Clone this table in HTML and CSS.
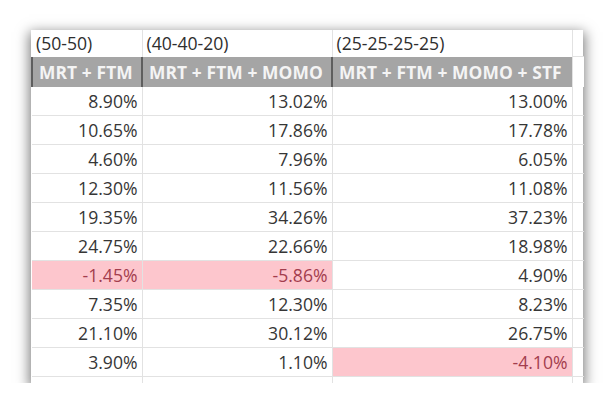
FILE: index.html
```html
<!DOCTYPE html>
<html>
<head>
<meta charset="utf-8">
<link rel="stylesheet" href="styles.css">
</head>
<body>
<div class="sheet">
  <table class="grid">
    <colgroup>
      <col class="c1"><col class="c2"><col class="c3"><col class="c4">
    </colgroup>
    <tr class="cap">
      <td>(50-50)</td><td>(40-40-20)</td><td>(25-25-25-25)</td><td></td>
    </tr>
    <tr class="head">
      <th>MRT + FTM</th><th>MRT + FTM + MOMO</th><th>MRT + FTM + MOMO + STF</th><td class="blank"></td>
    </tr>
    <tr><td>8.90%</td><td>13.02%</td><td>13.00%</td><td></td></tr>
    <tr><td>10.65%</td><td>17.86%</td><td>17.78%</td><td></td></tr>
    <tr><td>4.60%</td><td>7.96%</td><td>6.05%</td><td></td></tr>
    <tr><td>12.30%</td><td>11.56%</td><td>11.08%</td><td></td></tr>
    <tr><td>19.35%</td><td>34.26%</td><td>37.23%</td><td></td></tr>
    <tr><td>24.75%</td><td>22.66%</td><td>18.98%</td><td></td></tr>
    <tr><td class="neg">-1.45%</td><td class="neg">-5.86%</td><td>4.90%</td><td></td></tr>
    <tr><td>7.35%</td><td>12.30%</td><td>8.23%</td><td></td></tr>
    <tr><td>21.10%</td><td>30.12%</td><td>26.75%</td><td></td></tr>
    <tr><td>3.90%</td><td>1.10%</td><td class="neg">-4.10%</td><td></td></tr>
    <tr class="tail"><td></td><td></td><td></td><td></td></tr>
  </table>
</div>
</body>
</html>
```

FILE: styles.css
```css
html, body {
  margin: 0;
  padding: 0;
  background: #ffffff;
}

body {
  padding: 30px 0 0 31px;
  font-family: "Open Sans", "Liberation Sans", sans-serif;
}

.sheet {
  width: 552px;
  background: #ffffff;
  box-shadow: 0 4px 12px 2px rgba(0, 0, 0, 0.5);
}

.grid {
  width: 552px;
  table-layout: fixed;
  border-collapse: collapse;
  font-size: 17.6px;
  color: #363636;
}

.c1 { width: 110px; }
.c2 { width: 190px; }
.c3 { width: 240px; }
.c4 { width: 12px; }

.grid td {
  height: 28px;
  padding: 0 4px 0 4px;
  text-align: right;
  border-top: 1px solid #e2e2e2;
  border-left: 1px solid #e2e2e2;
  white-space: nowrap;
  overflow: hidden;
  line-height: 28px;
}

.grid tr td:first-child {
  border-left: none;
}

.cap td {
  height: 26px;
  line-height: 26px;
  text-align: left;
  border-top: none;
  padding-left: 4px;
  color: #2e2e2e;
}

.head th {
  height: 30px;
  padding: 0 0 0 6px;
  background: #a5a5a5;
  color: #f4f4f4;
  font-weight: 700;
  font-size: 17.4px;
  text-align: left;
  white-space: nowrap;
  overflow: hidden;
  border-left: 2px solid #5e5e5e;
  line-height: 30px;
  letter-spacing: 0.1px;
}

.head td.blank {
  background: #ffffff;
  border-left: 1px solid #e2e2e2;
}

.head + tr td {
  border-top: none;
}

.grid td.neg {
  background: #fdc6cd;
  color: #a33d4d;
}

.tail td {
  height: 6px;
  line-height: 6px;
}
```
